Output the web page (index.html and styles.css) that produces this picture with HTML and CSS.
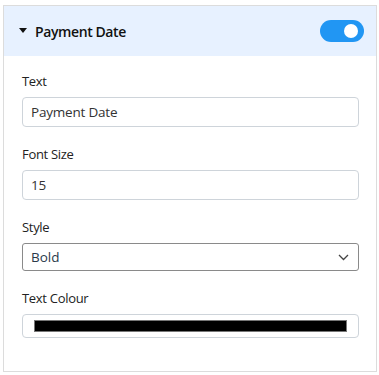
FILE: index.html
```html
<!DOCTYPE html>
<html>
<head>
<meta charset="utf-8">
<link rel="stylesheet" href="styles.css">
</head>
<body>
<div class="card">
  <div class="card-header">
    <div class="title"><span class="caret"></span><span>Payment Date</span></div>
    <div class="toggle"><span class="knob"></span></div>
  </div>
  <div class="card-body">
    <div class="group">
      <div class="label">Text</div>
      <div class="input">Payment Date</div>
    </div>
    <div class="group">
      <div class="label">Font Size</div>
      <div class="input">15</div>
    </div>
    <div class="group">
      <div class="label">Style</div>
      <div class="select"><span>Bold</span>
        <svg class="chev" width="11" height="7" viewBox="0 0 11 7"><path d="M1 1 L5.5 5.5 L10 1" fill="none" stroke="#444" stroke-width="1.3"/></svg>
      </div>
    </div>
    <div class="group last">
      <div class="label">Text Colour</div>
      <div class="color"><div class="swatch"></div></div>
    </div>
  </div>
</div>
</body>
</html>
```
FILE: styles.css
```css
html, body { margin: 0; padding: 0; background: #fff; }
body { padding: 5px 3px 0 3px; font-family: "Open Sans", "Noto Sans", sans-serif; color: #212529; }
.card { width: 374px; height: 367px; border: 1px solid #dcdcdc; box-sizing: border-box; }
.card-header { height: 50px; background: #e7f1ff; display: flex; align-items: center; justify-content: space-between; padding: 0 12px 0 15px; box-sizing: border-box; }
.title { display: flex; align-items: center; font-weight: 600; font-size: 14px; color: #111; letter-spacing: -0.4px; }
.caret { width: 0; height: 0; border-left: 4px solid transparent; border-right: 4px solid transparent; border-top: 5px solid #111; margin-right: 8px; margin-bottom: 2px; }
.toggle { width: 44px; height: 22px; border-radius: 11px; background: #2196f3; position: relative; }
.knob { position: absolute; right: 6px; top: 4px; width: 14px; height: 14px; border-radius: 50%; background: #fff; }
.card-body { padding: 15px 17px 0 18px; }
.group { margin-bottom: 17px; }
.label { font-size: 13px; font-weight: 500; line-height: 21px; margin-bottom: 5px; letter-spacing: -0.3px; color: #222; }
.input { height: 30px; border: 1px solid #ced4da; border-radius: 4px; box-sizing: border-box; padding: 0 8px; font-size: 13.5px; line-height: 28px; letter-spacing: -0.2px; color: #333; }
.select { height: 28px; border: 1px solid #8a8a8a; border-radius: 3px; box-sizing: border-box; padding: 0 8px 0 8px; font-size: 13.5px; line-height: 26px; display: flex; justify-content: space-between; align-items: center; color: #2a3a4a; }
.chev { margin-right: 1px; }
.color { height: 24px; border: 1px solid #ced4da; border-radius: 4px; box-sizing: border-box; padding: 5px 11px 5px 11px; }
.swatch { height: 12px; background: #000; border: 1px solid #777; box-sizing: border-box; }
```
